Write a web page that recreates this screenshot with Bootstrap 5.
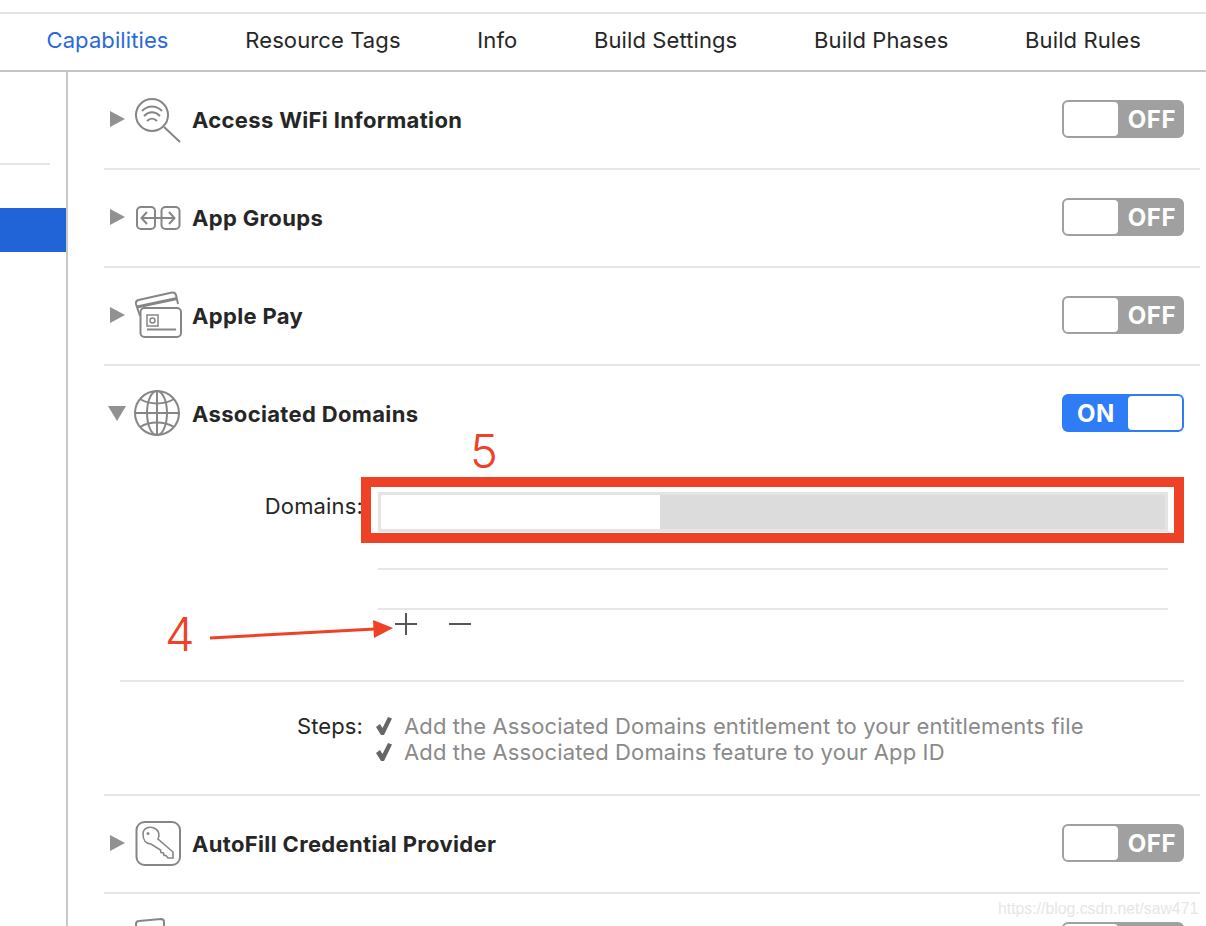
<!DOCTYPE html>
<html lang="en">
<head>
    <meta charset="UTF-8">
    <meta name="viewport" content="width=device-width, initial-scale=1.0">
    <title>Capabilities</title>
    <link href="https://cdn.jsdelivr.net/npm/bootstrap@5.3.0/dist/css/bootstrap.min.css" rel="stylesheet">
    <style>
        html, body { height: 926px; overflow: hidden; background: #fff; }
        body { position: relative; font-family: Inter, "Liberation Sans", sans-serif; color: #262626; }
        .tabbar { margin-top: 12px; height: 60px; padding-left: 46.5px; padding-bottom: 4px; gap: 76.7px; border-top: 2px solid #e4e4e4; border-bottom: 2px solid #c4c4c4; font-size: 22px; letter-spacing: .1px; }
        .tabbar .nav-link { padding: 0; color: #262626; }
        .tabbar .nav-link.active { color: #2a6ad8; }
        .side-pane { width: 68px; height: 854px; border-right: 2px solid #c8c8c8; padding-top: 91px; }
        .side-rule { width: 50px; height: 2px; background: #e6e6e6; }
        .side-pick { height: 44px; margin-top: 43px; background: #2064d8; }
        .cap-list { height: 854px; overflow: hidden; padding-left: 36px; padding-right: 6px; }
        .cap-row { height: 98px; padding-right: 16px; border-bottom: 2px solid #e6e6e6; }
        .cap-head { height: 96px; padding-right: 16px; }
        .cap-open { height: 430px; border-bottom: 2px solid #e6e6e6; }
        .twisty { width: 31px; flex: none; margin-bottom: 2px; }
        .cap-icon { width: 46px; height: 48px; flex: none; margin-right: 12px; overflow: visible; }
        .cap-name { font-size: 22px; font-weight: 700; letter-spacing: .34px; margin-left: -1px; }
        .flip { margin-left: auto; margin-bottom: 2px; width: 122px; height: 38px; border: 2px solid #a0a0a0; border-radius: 6px; background: #a0a0a0; color: #fff; font-size: 24px; font-weight: 700; letter-spacing: .6px; }
        .flip .knob { width: 54px; height: 34px; background: #fff; border-radius: 4px; flex: none; }
        .flip .word { flex: 1; text-align: center; padding-top: 2px; }
        .flip .knob + .word { padding-left: 4px; }
        .flip.on { background: #2f7df6; border-color: #2f7df6; }
        .form-line { padding-top: 30px; font-size: 22px; letter-spacing: .15px; line-height: 29px; }
        .form-label-col { width: 259px; text-align: right; flex: none; margin-right: 15px; }
        .domain-col { width: 790px; }
        .domain-field { height: 40px; background: #dcdcdc; border: 3px solid #e4e4e4; }
        .domain-cell { width: 279px; height: 100%; background: #fff; }
        .domain-rule { height: 2px; background: #e6e6e6; }
        .rule-one { margin-top: 36px; }
        .rule-two { margin-top: 38px; }
        .plus-minus { padding-left: 16px; gap: 31px; height: 28px; }
        .inner-rule { margin: 42px 16px 0 16px; height: 2px; background: #e6e6e6; }
        .steps { padding-top: 31px; line-height: 26px; font-size: 22px; letter-spacing: .12px; }
        .step-text { color: #8a8a8a; }
        .step-check { width: 16px; height: 18px; margin-left: -2px; margin-right: 12px; flex: none; }
        .mark-box { position: absolute; left: 361px; top: 477px; width: 823px; height: 66px; border: 10px solid #ee4126; }
        .mark-num { position: absolute; color: #ee4126; font-size: 47px; line-height: 1; font-weight: 300; }
        .num-five { left: 470px; top: 427px; }
        .num-four { left: 165px; top: 610px; }
        .mark-arrow { position: absolute; left: 205px; top: 615px; }
        .watermark { position: absolute; left: 998px; top: 897px; font-family: "Liberation Sans", sans-serif; font-size: 15.8px; color: #e6e6e6; }
    </style>
</head>
<body>
    <nav class="nav tabbar align-items-center flex-nowrap">
        <a class="nav-link active" href="#">Capabilities</a>
        <a class="nav-link" href="#">Resource Tags</a>
        <a class="nav-link" href="#">Info</a>
        <a class="nav-link" href="#">Build Settings</a>
        <a class="nav-link" href="#">Build Phases</a>
        <a class="nav-link" href="#">Build Rules</a>
    </nav>

    <div class="d-flex">
        <div class="side-pane flex-shrink-0">
            <div class="side-rule"></div>
            <div class="side-pick"></div>
        </div>

        <div class="cap-list flex-grow-1">
            <div class="cap-row d-flex align-items-center">
                <svg class="twisty" width="31" height="18" viewBox="0 0 31 18"><path d="M6 1 L21 9 L6 17 Z" fill="#919191"/></svg>
                <svg class="cap-icon" viewBox="0 0 46 48" fill="none" stroke="#868686" stroke-width="2">
                    <circle cx="17" cy="19" r="16"/>
                    <path d="M29 31 L45 46"/>
                    <path d="M7 15 C13 9 21 9 27 15"/>
                    <path d="M9 20 C14 15 20 15 25 20"/>
                    <path d="M12 25 C15 22 19 22 22 25"/>
                </svg>
                <span class="cap-name">Access WiFi Information</span>
                <div class="flip d-flex align-items-center"><div class="knob"></div><div class="word">OFF</div></div>
            </div>

            <div class="cap-row d-flex align-items-center">
                <svg class="twisty" width="31" height="18" viewBox="0 0 31 18"><path d="M6 1 L21 9 L6 17 Z" fill="#919191"/></svg>
                <svg class="cap-icon" viewBox="0 0 46 48" fill="none" stroke="#868686" stroke-width="2">
                    <rect x="2" y="13" width="18" height="22" rx="4"/>
                    <rect x="26.500" y="13" width="18" height="22" rx="4"/>
                    <path d="M7 24 H39"/>
                    <path d="M12 18 L6.500 24 L12 30"/>
                    <path d="M34 18 L39.500 24 L34 30"/>
                </svg>
                <span class="cap-name">App Groups</span>
                <div class="flip d-flex align-items-center"><div class="knob"></div><div class="word">OFF</div></div>
            </div>

            <div class="cap-row d-flex align-items-center">
                <svg class="twisty" width="31" height="18" viewBox="0 0 31 18"><path d="M6 1 L21 9 L6 17 Z" fill="#919191"/></svg>
                <svg class="cap-icon" viewBox="0 0 46 48" fill="none" stroke="#868686" stroke-width="2">
                    <path d="M5 24 L1 12 Q0.500 8.500 3.500 8 L37 0.500 Q40 0 41 3 L43 12"/>
                    <path d="M2 15 L42 6.500" stroke-width="3"/>
                    <rect x="5.500" y="16" width="40.500" height="29" rx="4" fill="#fff"/>
                    <rect x="12" y="23" width="11" height="11" stroke-width="1.500"/>
                    <circle cx="17.500" cy="28.500" r="2.500" stroke-width="1.500"/>
                    <path d="M12 37.500 H41" stroke-width="2"/>
                </svg>
                <span class="cap-name">Apple Pay</span>
                <div class="flip d-flex align-items-center"><div class="knob"></div><div class="word">OFF</div></div>
            </div>

            <div class="cap-open">
                <div class="cap-head d-flex align-items-center">
                    <svg class="twisty" width="31" height="18" viewBox="0 0 31 18"><path d="M4 2 L22 2 L13 17 Z" fill="#919191"/></svg>
                    <svg class="cap-icon" viewBox="0 0 46 48" fill="none" stroke="#868686" stroke-width="2">
                        <circle cx="22" cy="23" r="22"/>
                        <ellipse cx="22" cy="23" rx="10" ry="22"/>
                        <path d="M22 1 V45"/>
                        <path d="M0 23 H44"/>
                        <path d="M5 9 C15 15 29 15 39 9"/>
                        <path d="M5 37 C15 31 29 31 39 37"/>
                    </svg>
                    <span class="cap-name">Associated Domains</span>
                    <div class="flip on d-flex align-items-center"><div class="word">ON</div><div class="knob"></div></div>
                </div>

                <div class="form-line d-flex">
                    <div class="form-label-col">Domains:</div>
                    <div class="domain-col">
                        <div class="domain-field"><div class="domain-cell"></div></div>
                        <div class="domain-rule rule-one"></div>
                        <div class="domain-rule rule-two"></div>
                        <div class="plus-minus d-flex align-items-center">
                            <svg width="24" height="24" viewBox="0 0 24 24" stroke="#555" stroke-width="2"><path d="M1 12 H23 M12 1 V23"/></svg>
                            <svg width="22" height="24" viewBox="0 0 22 24" stroke="#555" stroke-width="2"><path d="M0 12 H22"/></svg>
                        </div>
                    </div>
                </div>

                <div class="inner-rule"></div>

                <div class="steps d-flex">
                    <div class="form-label-col">Steps:</div>
                    <div>
                        <div class="d-flex align-items-center">
                            <svg class="step-check" viewBox="0 0 16 18"><path d="M0 10 L4 7 L6.500 11 L12 0 L16 1.500 L8 18 L5 18 Z" fill="#666"/></svg>
                            <span class="step-text">Add the Associated Domains entitlement to your entitlements file</span>
                        </div>
                        <div class="d-flex align-items-center">
                            <svg class="step-check" viewBox="0 0 16 18"><path d="M0 10 L4 7 L6.500 11 L12 0 L16 1.500 L8 18 L5 18 Z" fill="#666"/></svg>
                            <span class="step-text">Add the Associated Domains feature to your App ID</span>
                        </div>
                    </div>
                </div>
            </div>

            <div class="cap-row d-flex align-items-center">
                <svg class="twisty" width="31" height="18" viewBox="0 0 31 18"><path d="M6 1 L21 9 L6 17 Z" fill="#919191"/></svg>
                <svg class="cap-icon" viewBox="0 0 46 48" fill="none" stroke="#868686" stroke-width="2">
                    <rect x="1.500" y="2" width="43.500" height="43" rx="8"/>
                    <path d="M8 14 C8 8 14 6 19 8 C24 10 25 15 23 19 L38 32 L38 38 L33 38 L31 35.500 L29 35.500 L28.500 33 L26 32.500 L25.500 30 L16 24 C11 24 8 20 8 14 Z" stroke-width="1.600"/>
                    <circle cx="13" cy="13.500" r="1.500" fill="#868686" stroke="none"/>
                </svg>
                <span class="cap-name">AutoFill Credential Provider</span>
                <div class="flip d-flex align-items-center"><div class="knob"></div><div class="word">OFF</div></div>
            </div>

            <div class="cap-row d-flex align-items-center">
                <svg class="twisty" width="31" height="18" viewBox="0 0 31 18"><path d="M6 1 L21 9 L6 17 Z" fill="#919191"/></svg>
                <svg class="cap-icon" viewBox="0 0 46 48" fill="none" stroke="#868686" stroke-width="2">
                    <path d="M1 6 Q1 3 4 3 L26 1 Q29 1 29 4 V40 H1 Z"/>
                </svg>
                <div class="flip d-flex align-items-center"><div class="knob"></div></div>
            </div>
        </div>
    </div>

    <div class="mark-box"></div>
    <div class="mark-num num-five">5</div>
    <div class="mark-num num-four">4</div>
    <svg class="mark-arrow" width="190" height="30" viewBox="0 0 190 30"><path d="M5 23 L170 14" stroke="#ee4126" stroke-width="3" fill="none"/><path d="M168 5 L188 13 L169 23 Z" fill="#ee4126"/></svg>
    <div class="watermark">https://blog.csdn.net/saw471</div>

    <script src="https://cdn.jsdelivr.net/npm/bootstrap@5.3.0/dist/js/bootstrap.bundle.min.js"></script>
</body>
</html>
